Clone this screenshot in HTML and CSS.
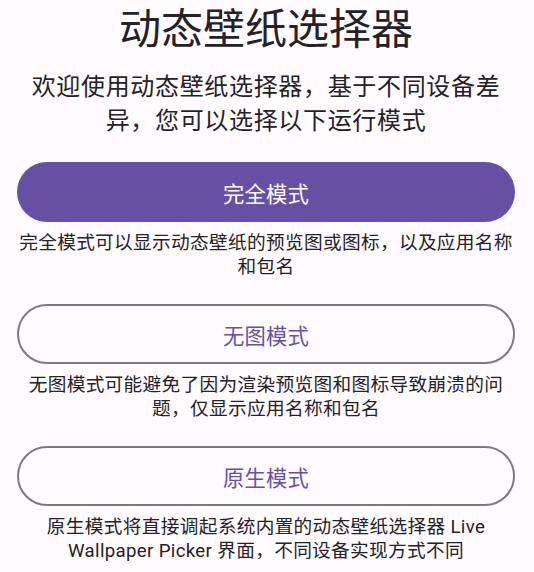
FILE: index.html
```html
<!DOCTYPE html>
<html lang="zh-CN">
<head>
<meta charset="utf-8">
<title>动态壁纸选择器</title>
<link rel="stylesheet" href="styles.css">
</head>
<body>
<main class="page">
  <h1 class="title">动态壁纸选择器</h1>
  <p class="subtitle">欢迎使用动态壁纸选择器，基于不同设备差异，您可以选择以下运行模式</p>

  <section class="mode">
    <button class="btn btn-filled">完全模式</button>
    <p class="desc">完全模式可以显示动态壁纸的预览图或图标，以及应用名称和包名</p>
  </section>

  <section class="mode">
    <button class="btn btn-outlined">无图模式</button>
    <p class="desc">无图模式可能避免了因为渲染预览图和图标导致崩溃的问题，仅显示应用名称和包名</p>
  </section>

  <section class="mode">
    <button class="btn btn-outlined">原生模式</button>
    <p class="desc">原生模式将直接调起系统内置的动态壁纸选择器 Live Wallpaper Picker 界面，不同设备实现方式不同</p>
  </section>
</main>
</body>
</html>
```

FILE: styles.css
```css
html, body {
  margin: 0;
  padding: 0;
  background: #FFFBFE;
}

body {
  font-family: Roboto, "Noto Sans CJK SC", sans-serif;
  color: #1C1B1F;
}

.page {
  display: flex;
  flex-direction: column;
  padding: 4px 19px 0 17px;
  text-align: center;
}

.title {
  margin: 0;
  font-size: 42px;
  line-height: 52px;
  font-weight: 400;
  color: #232227;
}

.subtitle {
  margin: 14px 0 0;
  font-size: 24px;
  line-height: 34px;
  letter-spacing: 0.67px;
  color: #232227;
}

.mode {
  display: flex;
  flex-direction: column;
  margin-top: 24px;
}

.mode + .mode {
  margin-top: 25.5px;
}

.btn {
  box-sizing: border-box;
  height: 60px;
  width: 100%;
  border-radius: 30px;
  font-family: Roboto, "Noto Sans CJK SC", sans-serif;
  font-size: 21.33px;
  letter-spacing: 0.13px;
  font-weight: 400;
  cursor: pointer;
}

.btn-filled {
  background: #6750A4;
  color: #FFFFFF;
  border: none;
}

.btn-outlined {
  background: transparent;
  color: #6750A4;
  border: 2px solid #7D7882;
}

.desc {
  margin: 8.5px 0 0;
  font-size: 18.67px;
  line-height: 24px;
  letter-spacing: 0.33px;
  color: #232227;
}
```
